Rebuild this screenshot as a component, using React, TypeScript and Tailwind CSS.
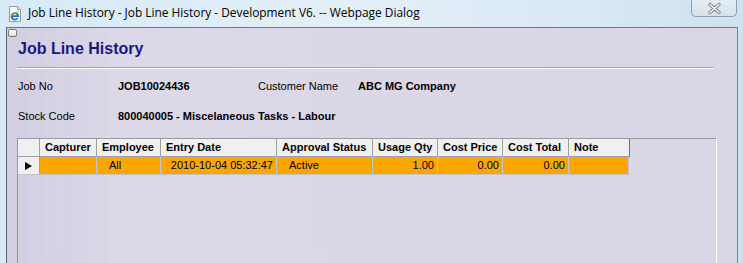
const cols = [
  { label: "", w: "w-[22px]" },
  { label: "Capturer", w: "w-[57px]" },
  { label: "Employee", w: "w-[64px]" },
  { label: "Entry Date", w: "w-[116px]" },
  { label: "Approval Status", w: "w-[96px]" },
  { label: "Usage Qty", w: "w-[65px]" },
  { label: "Cost Price", w: "w-[65px]" },
  { label: "Cost Total", w: "w-[66px]" },
  { label: "Note", w: "w-[60px]" },
];

function IeIcon() {
  return (
    <svg width="16" height="16" viewBox="0 0 16 16">
      <path d="M2.5 0.5h8l3 3v12h-11z" fill="#fdfdfd" stroke="#9a9a9a" />
      <path d="M10.5 0.5v3h3" fill="#e8e8e8" stroke="#9a9a9a" />
      <path
        d="M5 10.2h6.2a3.3 3.3 0 1 0-0.6 2.1"
        fill="none"
        stroke="#1d6fd1"
        strokeWidth="1.8"
      />
      <path
        d="M2 13.5c1-3 5-7 10-8"
        fill="none"
        stroke="#f0b400"
        strokeWidth="1"
      />
    </svg>
  );
}

function CloseButton() {
  return (
    <div className="ml-auto mr-[6px] flex h-[17px] w-[46px] items-center justify-center self-start rounded-b-[5px] border border-t-0 border-[#8e9cab] bg-gradient-to-b from-[#e6eef5] to-[#d4e1ec]">
      <svg width="13" height="11" viewBox="0 0 13 11">
        <path d="M2 1.5l9 8M11 1.5l-9 8" stroke="#6d7884" strokeWidth="3.2" strokeLinecap="round" />
        <path d="M2 1.5l9 8M11 1.5l-9 8" stroke="#ffffff" strokeWidth="1.6" strokeLinecap="round" />
      </svg>
    </div>
  );
}

function Field({ label, value }: { label: string; value: string }) {
  return (
    <>
      <div className="w-[100px]">{label}</div>
      <div className="w-[140px] font-bold">{value}</div>
    </>
  );
}

export default function App() {
  return (
    <div className="flex h-[263px] w-[743px] flex-col overflow-hidden bg-gradient-to-r from-[#d6eaf7] via-[#e4f0f9] to-[#cfe2f1] font-['Liberation_Sans',Arial,sans-serif]">
      <div className="flex h-[27px] shrink-0">
        <div className="ml-[7px] mt-[6px]">
          <IeIcon />
        </div>
        <div className="ml-[5px] mt-[4px] font-['Open_Sans',sans-serif] text-[11.9px] leading-[16px] text-black">
          Job Line History - Job Line History - Development V6. -- Webpage Dialog
        </div>
        <CloseButton />
      </div>

      <div className="ml-[6px] mr-[5px] flex flex-1 flex-col border-l border-t border-r border-l-[#5e6670] border-t-[#6f7780] border-r-[#7c848c] bg-gradient-to-r from-[#d2cee2] via-[#dcd8e7] via-15% to-[#dad6e5] text-[11px] text-black">
        <div className="ml-[1px] mt-[1px] h-[8px] w-[9px] rounded-[2px] border border-[#7a7a7a] bg-gradient-to-b from-white to-[#dcdcdc]" />
        <h1 className="ml-[11px] mt-[2px] text-[16px] font-bold leading-[20px] text-[#1a1a78]">
          Job Line History
        </h1>
        <div className="ml-[10px] mt-[8px] h-[2px] w-[697px] border-t border-[#a8a8a8] border-b border-b-white" />

        <div className="ml-[11px] mt-[10px] flex leading-[14px]">
          <Field label="Job No" value="JOB10024436" />
          <Field label="Customer Name" value="ABC MG Company" />
        </div>
        <div className="ml-[11px] mt-[16px] flex leading-[14px]">
          <div className="w-[100px]">Stock Code</div>
          <div className="font-bold">800040005 - Miscelaneous Tasks - Labour</div>
        </div>

        <div className="ml-[10px] mt-[15px] w-[700px] flex-1 border-l border-t border-r border-l-[#9a9a9a] border-t-[#9a9a9a] border-r-white">
          <div className="flex w-fit border-r border-[#6d6d6d]">
            {cols.map((c, i) => (
              <div
                key={i}
                className={`${c.w} h-[18px] shrink-0 border-b border-r border-[#a0a0a0] bg-[#f0f0f0] pl-[5px] font-bold leading-[17px] last:border-r-0`}
              >
                {c.label}
              </div>
            ))}
          </div>
          <div className="flex w-fit border-b border-r border-[#c4c4c4] bg-[#ffa500] leading-[17px]">
            <div className="flex h-[17px] w-[22px] shrink-0 items-center justify-center border-r border-[#a0a0a0] bg-[#f0f0f0]">
              <svg width="7" height="8" viewBox="0 0 7 8">
                <path d="M0 0L7 4L0 8z" fill="#000" />
              </svg>
            </div>
            <div className="w-[57px] shrink-0 border-r border-[#c8c8c8]" />
            <div className="w-[64px] shrink-0 border-r border-[#c8c8c8] pl-[12px]">All</div>
            <div className="w-[116px] shrink-0 border-r border-[#c8c8c8] pr-[3px] text-right">2010-10-04 05:32:47</div>
            <div className="w-[96px] shrink-0 border-r border-[#c8c8c8] pl-[12px]">Active</div>
            <div className="w-[65px] shrink-0 border-r border-[#c8c8c8] pr-[3px] text-right">1.00</div>
            <div className="w-[65px] shrink-0 border-r border-[#c8c8c8] pr-[3px] text-right">0.00</div>
            <div className="w-[66px] shrink-0 border-r border-[#c8c8c8] pr-[3px] text-right">0.00</div>
            <div className="w-[59px] shrink-0" />
          </div>
        </div>
      </div>
    </div>
  );
}
